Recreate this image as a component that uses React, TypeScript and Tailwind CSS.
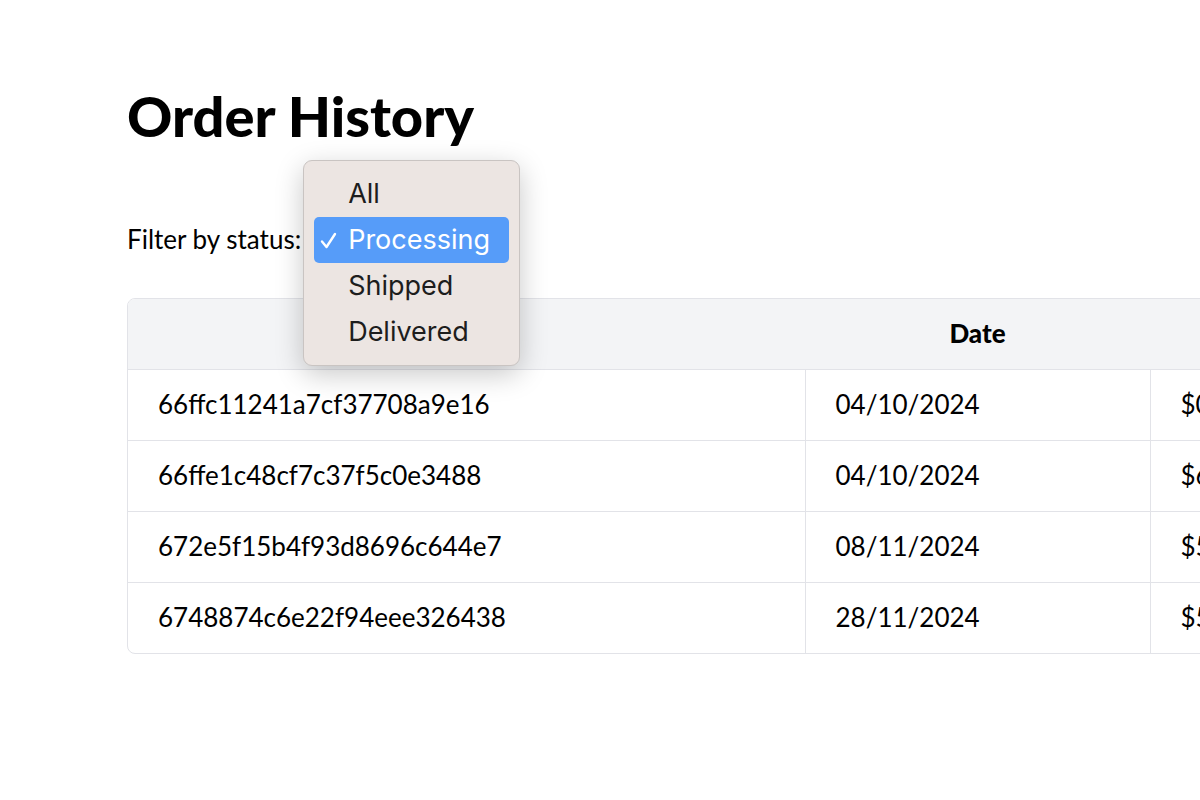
const orders = [
	{ id: "66ffc11241a7cf37708a9e16", date: "04/10/2024", total: "$0.00" },
	{ id: "66ffe1c48cf7c37f5c0e3488", date: "04/10/2024", total: "$64.50" },
	{ id: "672e5f15b4f93d8696c644e7", date: "08/11/2024", total: "$54.99" },
	{ id: "6748874c6e22f94eee326438", date: "28/11/2024", total: "$59.99" },
];

const options = ["All", "Processing", "Shipped", "Delivered"];

export default function App() {
	return (
		<div className="w-[1200px] h-[800px] overflow-hidden bg-white text-black font-['Lato',sans-serif]">
			<div className="pl-[127px] pt-[86px]">
				<h1 className="text-[56px] leading-[60px] font-black">Order History</h1>

				{/* Filter */}
				<div className="mt-[75px] flex items-center h-[36px] text-[26px]">
					<span>Filter by status:</span>
					<div className="relative ml-[8px]">
						<div className="w-[200px] h-[30px]" />
						<StatusMenu />
					</div>
				</div>

				{/* Table */}
				<div className="mt-[41px] w-[1367px] rounded-lg border border-[#e2e3e8] overflow-hidden">
					<table className="table-fixed border-collapse w-full text-[26px]">
						<colgroup>
							<col className="w-[677px]" />
							<col className="w-[345px]" />
							<col className="w-[345px]" />
						</colgroup>
						<thead>
							<tr className="bg-[#f3f4f6] h-[70px]">
								<th className="font-black text-center">Order ID</th>
								<th className="font-black text-center">Date</th>
								<th className="font-black text-center">Total</th>
							</tr>
						</thead>
						<tbody>
							{orders.map((o) => (
								<tr key={o.id} className="h-[71px] border-t border-[#e2e3e8]">
									<td className="px-[30px]">{o.id}</td>
									<td className="px-[30px] border-l border-[#e2e3e8]">{o.date}</td>
									<td className="px-[30px] border-l border-[#e2e3e8]">{o.total}</td>
								</tr>
							))}
						</tbody>
					</table>
				</div>
			</div>
		</div>
	);
}

function StatusMenu() {
	return (
		<div className="absolute left-[-6px] top-[-64px] w-[217px] py-[10px] px-[10px] rounded-[9px] bg-[#ece5e2] border border-[#c9c4c2] shadow-[0_8px_28px_rgba(0,0,0,0.22)] font-['Inter',sans-serif] text-[27px] text-[#1d1d1d] z-10">
			{options.map((opt) => {
				const selected = opt === "Processing";
				return (
					<div
						key={opt}
						className={`relative h-[46px] flex items-center pl-[34px] rounded-[5px] ${selected ? "bg-[#569cf9] text-white" : ""}`}
					>
						{selected && (
							<svg className="absolute left-[6px] top-[15px] w-[17px] h-[17px]" viewBox="0 0 17 17" fill="none">
								<path d="M2 9.5 L6.5 15 L15 2" stroke="white" strokeWidth="2.4" strokeLinecap="round" strokeLinejoin="round" />
							</svg>
						)}
						<span>{opt}</span>
					</div>
				);
			})}
		</div>
	);
}
